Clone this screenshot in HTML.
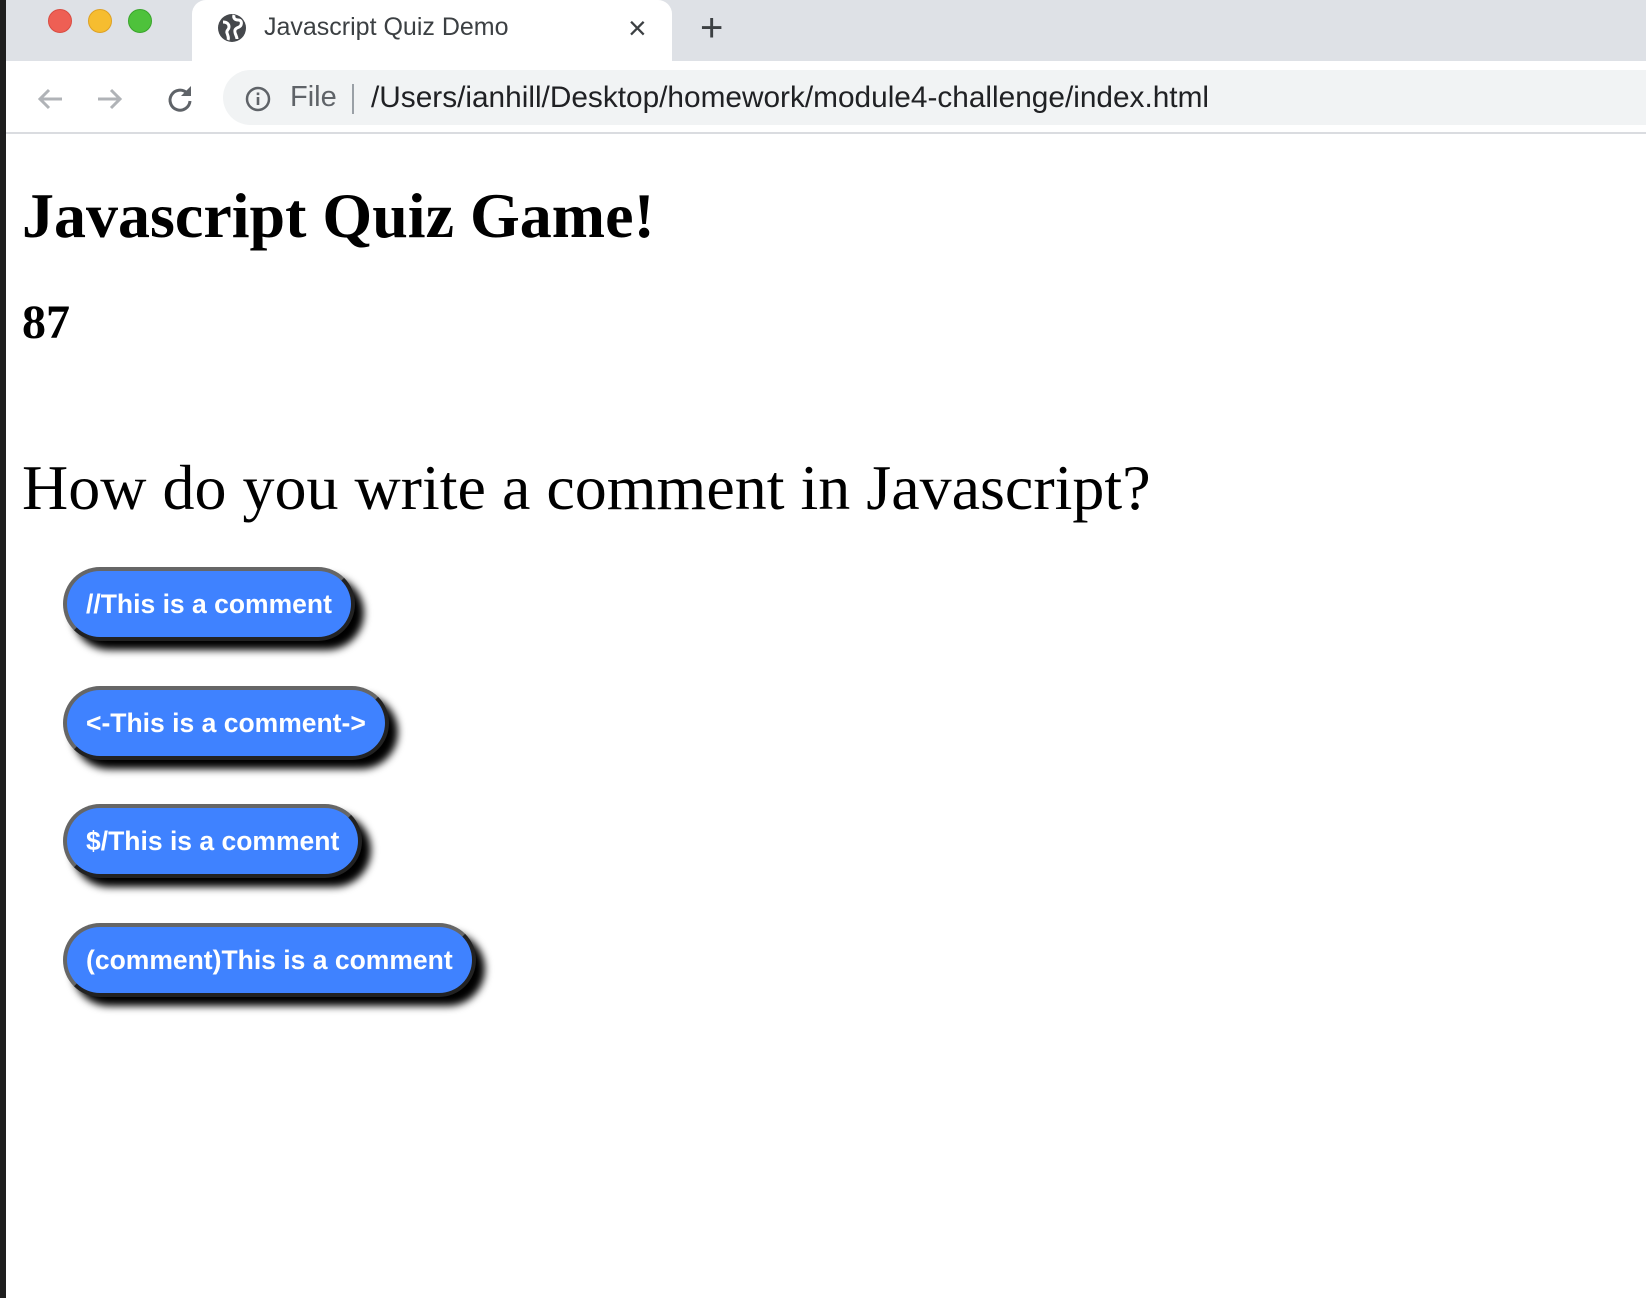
<!DOCTYPE html>
<html><head><meta charset="utf-8"><style>
*{margin:0;padding:0;box-sizing:border-box}
body{width:1646px;height:1298px;background:#fff;position:relative;overflow:hidden;font-family:"Liberation Sans",sans-serif}
.strip{position:absolute;left:0;top:0;width:6px;height:1298px;background:#1e1e1e}
.tabbar{position:absolute;left:6px;top:0;right:0;height:61px;background:#dee1e6}
.dot{position:absolute;top:9px;width:24px;height:24px;border-radius:50%}
.tab{position:absolute;left:192px;top:0;width:480px;height:61px;background:#fff;border-radius:14px 14px 0 0}
.tabtitle{position:absolute;left:264px;top:13px;font-size:25px;color:#3c4043}
.toolbar{position:absolute;left:6px;top:61px;right:0;height:73px;background:#fff;border-bottom:2px solid #dadce0}
.addr{position:absolute;left:223px;top:70px;right:-40px;height:55px;background:#f1f3f4;border-radius:28px}
.url{position:absolute;left:371px;top:81px;font-size:29.8px;color:#202124;white-space:nowrap}
.file{position:absolute;left:290px;top:81px;font-size:29px;color:#5f6368}
.sep{position:absolute;left:352px;top:84px;width:2px;height:30px;background:#9aa0a6}
.serif{position:absolute;left:22px;font-family:"Liberation Serif",serif;color:#000;white-space:nowrap;line-height:1}
.btn{position:absolute;left:63px;height:74px;background:#3f82ff;border:4px solid #666;border-right-color:#222;border-bottom-color:#222;border-radius:37px;box-shadow:9px 9px 8px #000;color:#fff;font-weight:bold;font-size:26.5px;padding:0 19px;line-height:66px;white-space:nowrap}
</style></head><body>
<div class="strip"></div>
<div class="tabbar"></div>
<div class="dot" style="left:48px;background:#ee5f54;border:1px solid #d94c42"></div>
<div class="dot" style="left:88px;background:#f6bd30;border:1px solid #dea124"></div>
<div class="dot" style="left:128px;background:#4ec23b;border:1px solid #3aa52c"></div>
<div class="tab"></div>
<svg style="position:absolute;left:217px;top:13px" width="30" height="30" viewBox="0 0 30 30"><circle cx="15" cy="15" r="14" fill="#45484c"/><path d="M6 9c4 0 6 2 6 5s-3 3-2 6 2 5 1 7M17 2c-1 3 1 5 4 5s4 2 3 5c-1 3-5 2-6 5s2 6 2 9" stroke="#fff" stroke-width="3" fill="none"/></svg>
<div class="tabtitle">Javascript Quiz Demo</div>
<div style="position:absolute;left:628px;top:10px;font-size:32px;color:#3c4043">×</div>
<div style="position:absolute;left:700px;top:6px;font-size:40px;color:#3c4043;font-weight:300">+</div>
<div class="toolbar"></div>
<svg style="position:absolute;left:34px;top:84px" width="200" height="30" viewBox="0 0 200 30"><path d="M28 15H6M15 6l-9 9 9 9" stroke="#b0b3b7" stroke-width="3" fill="none"/><path d="M64 15h22M77 6l9 9-9 9" stroke="#b0b3b7" stroke-width="3" fill="none"/><path d="M153 9a10 10 0 1 0 3 8" stroke="#5f6368" stroke-width="3" fill="none"/><path d="M157 2v10h-10z" fill="#5f6368"/></svg>
<div class="addr"></div>
<svg style="position:absolute;left:244px;top:85px" width="28" height="28" viewBox="0 0 28 28"><circle cx="14" cy="14" r="11" stroke="#5f6368" stroke-width="2.5" fill="none"/><rect x="12.7" y="12" width="2.6" height="8" fill="#5f6368"/><rect x="12.7" y="7.5" width="2.6" height="2.6" fill="#5f6368"/></svg>
<div class="file">File</div>
<div class="sep"></div>
<div class="url">/Users/ianhill/Desktop/homework/module4-challenge/index.html</div>
<div class="serif" style="top:184px;font-size:64px;font-weight:bold">Javascript Quiz Game!</div>
<div class="serif" style="top:299px;font-size:48px;font-weight:bold">87</div>
<div class="serif" style="top:456px;font-size:64px">How do you write a comment in Javascript?</div>
<div class="btn" style="top:567px">//This is a comment</div>
<div class="btn" style="top:686px">&lt;-This is a comment-&gt;</div>
<div class="btn" style="top:804px">$/This is a comment</div>
<div class="btn" style="top:923px">(comment)This is a comment</div>
</body></html>
